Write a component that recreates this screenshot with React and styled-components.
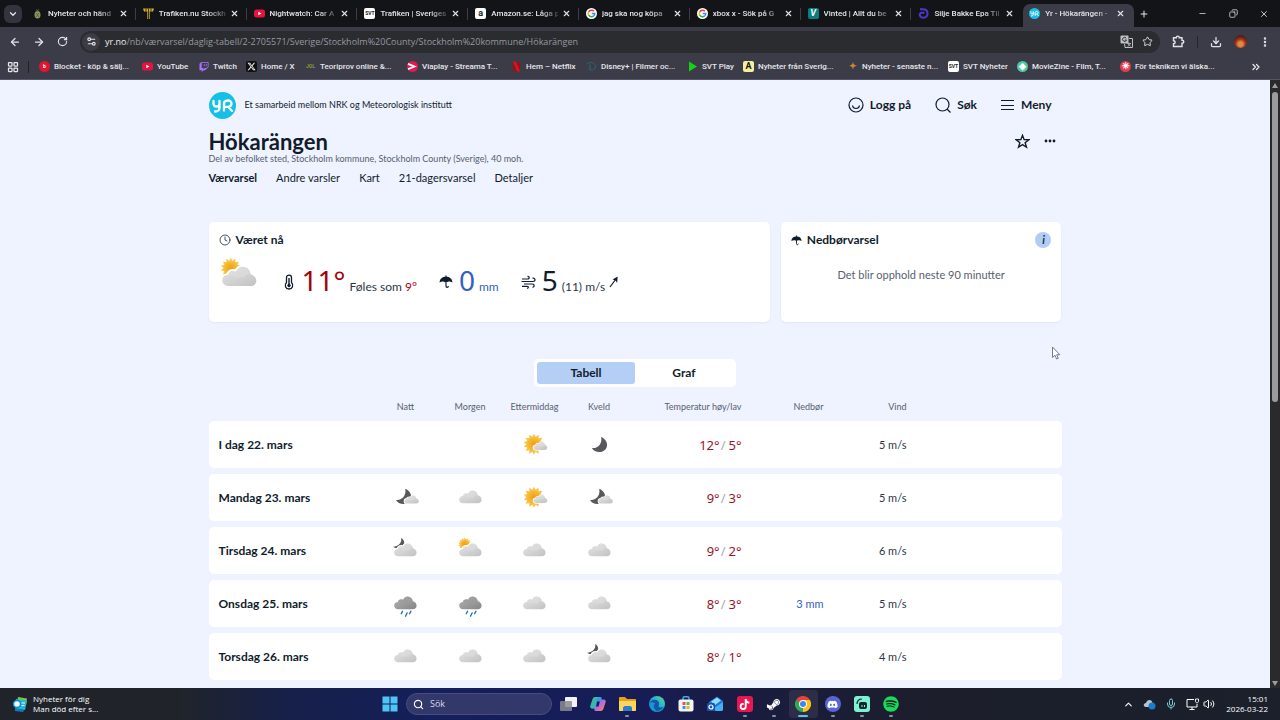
import React, { useState } from "react";
import styled, { createGlobalStyle } from "styled-components";
import {
  FaDiscord,
  FaSteamSymbol,
  FaSpotify,
  FaTiktok,
  FaXTwitter,
  FaTwitch,
} from "react-icons/fa6";
import {
  ArrowLeft,
  ArrowRight,
  ChevronDown,
  ChevronUp,
  ChevronsRight,
  Clock,
  Copy,
  Download,
  EllipsisVertical,
  LayoutGrid,
  Mic,
  Minus,
  Plus,
  RotateCw,
  Search,
  Settings2,
  Star,
  Volume2,
  X,
} from "lucide-react";

const GlobalStyle = createGlobalStyle`
  * {
    box-sizing: border-box;
  }

  body {
    margin: 0;
    font-family: "Lato", "Noto Sans", sans-serif;
    color: #101c2c;
    background: #eff2ff;
  }

  button {
    border: none;
    padding: 0;
    background: none;
    color: inherit;
    font: inherit;
    cursor: pointer;
  }

  a {
    color: inherit;
    text-decoration: none;
  }

  h1, h2, p {
    margin: 0;
  }

  svg {
    display: block;
    flex-shrink: 0;
  }
`;

const Screen = styled.div`
  display: flex;
  flex-direction: column;
  height: 100vh;
  overflow: hidden;
`;

/* browser */

const TabStrip = styled.div`
  display: flex;
  align-items: stretch;
  height: 27px;
  background: #121418;
  color: #e4e5ea;
  font-family: "Roboto", sans-serif;
  font-size: 8px;
  font-weight: 500;
`;

const TabSearch = styled.button`
  display: flex;
  align-items: center;
  justify-content: center;
  width: 18px;
  height: 18px;
  margin: 5px 4px;
  border-radius: 6px;
  background: #34343f;
`;

const Tabs = styled.div`
  flex: 1;
  display: flex;
  min-width: 0;
`;

const Tab = styled.div`
  flex: 1;
  display: flex;
  align-items: center;
  gap: 4px;
  min-width: 0;
  margin-top: ${(props) => (props.$active ? "4px" : "0")};
  height: ${(props) => (props.$active ? "23px" : "27px")};
  padding-bottom: ${(props) => (props.$active ? "4px" : "0")};
  padding-left: 6px;
  padding-right: 1px;
  border-radius: 7px 7px 0 0;
  background: ${(props) => (props.$active ? "#3c3c49" : "transparent")};

  > button:first-child {
    flex: 1;
    display: flex;
    align-items: center;
    gap: 5px;
    min-width: 0;
  }
`;

const TabTitle = styled.span`
  flex: 1;
  min-width: 0;
  text-align: left;
  white-space: nowrap;
  line-height: 12px;
  mask-image: linear-gradient(90deg, #000 74%, rgba(0, 0, 0, 0.2));
`;

const TabDivider = styled.span`
  width: 1px;
  height: 12px;
  margin-left: 3px;
  background: ${(props) => (props.$hidden ? "transparent" : "#3c3d46")};
`;

const WindowControls = styled.div`
  display: flex;
  align-items: center;
  justify-content: space-between;
  width: 146px;
  padding: 0 11px 0 5px;

  button:first-child {
    margin-right: 28px;
  }
`;

const Toolbar = styled.div`
  display: flex;
  align-items: center;
  gap: 12px;
  height: 29px;
  padding: 0 9px;
  background: #3c3c49;
  color: #e2e3ea;
`;

const AddressBar = styled.div`
  flex: 1;
  display: flex;
  align-items: center;
  gap: 9px;
  height: 22px;
  padding: 0 7px 0 2px;
  border-radius: 11px;
  background: #2b2c30;
`;

const SiteInfo = styled.span`
  display: flex;
  align-items: center;
  justify-content: center;
  width: 18px;
  height: 18px;
  margin-right: -4px;
  border-radius: 50%;
  background: #3c3c45;
`;

const Address = styled.div`
  flex: 1;
  color: #9698a0;
  font-family: "Open Sans", sans-serif;
  font-size: 9px;
  line-height: 14px;

  b {
    color: #f0f0f4;
    font-weight: 400;
  }
`;

const ToolDivider = styled.span`
  width: 1px;
  height: 12px;
  background: #23243a;
`;

const Avatar = styled.span`
  width: 13px;
  height: 13px;
  border-radius: 50%;
  background: radial-gradient(circle at 50% 70%, #e08a3c 0 20%, #a3301c 45%, #40201a 75%);
`;

const BookmarkBar = styled.nav`
  display: flex;
  align-items: center;
  height: 24px;
  padding: 0 18px 2px 7px;
  background: #3c3c49;
  color: #e6e6ec;
  font-family: "Roboto", sans-serif;
  font-size: 8px;
  font-weight: 500;
  border-bottom: 1px solid #55566a;
`;

const BookmarkDivider = styled.span`
  width: 1px;
  height: 12px;
  margin: 0 10px 0 9px;
  background: #1f2030;
`;

const Bookmark = styled.a`
  display: flex;
  align-items: center;
  gap: 4px;
  width: ${(props) => props.$width}px;
  white-space: nowrap;
  line-height: 12px;
`;

const Favicon = styled.span`
  display: flex;
  align-items: center;
  justify-content: center;
  flex-shrink: 0;
  width: 11px;
  height: 11px;
  border-radius: ${(props) => (props.$round ? "50%" : "2px")};
  background: ${(props) => props.$bg || "transparent"};
  color: ${(props) => props.$color || "#fff"};
  font-size: ${(props) => (props.$tiny ? "5px" : "9px")};
  font-weight: 700;
  line-height: 11px;
`;

const More = styled.button`
  margin-left: auto;
`;

/* page */

const Viewport = styled.div`
  flex: 1;
  display: flex;
  min-height: 0;
  position: relative;
  background: #eff2ff;
`;

const Page = styled.div`
  flex: 1;
  min-width: 0;
  overflow: hidden;
`;

const Container = styled.div`
  max-width: 853px;
  margin: 0 auto;
`;

const Scrollbar = styled.div`
  display: flex;
  flex-direction: column;
  align-items: center;
  width: 10px;
  padding: 3px 0 2px;
  background: #2a2a2d;
`;

const Track = styled.div`
  flex: 1;
  width: 6px;
  margin: 4px 0;
`;

const Thumb = styled.div`
  height: 53%;
  border-radius: 3px;
  background: #9c9c9e;
`;

const Header = styled.header`
  display: flex;
  align-items: center;
  height: 50px;
`;

const Tagline = styled.p`
  margin-left: 9px;
  font-size: 9px;
  line-height: 14px;
`;

const HeaderActions = styled.div`
  display: flex;
  gap: 24px;
  margin-left: auto;
  padding-right: 10px;
  font-size: 12px;
  font-weight: 700;

  button {
    display: flex;
    align-items: center;
    gap: 6px;
    line-height: 16px;
  }
`;

const TitleRow = styled.div`
  display: flex;
  align-items: flex-start;
  justify-content: space-between;

  h1 {
    font-size: 22px;
    font-weight: 700;
    line-height: 24px;
  }
`;

const TitleActions = styled.div`
  display: flex;
  align-items: center;
  gap: 14px;
  height: 22px;
  padding-right: 6px;
`;

const Place = styled.p`
  color: #56616f;
  font-size: 9px;
  line-height: 10px;
`;

const PageNav = styled.nav`
  display: flex;
  gap: 19px;
  margin-top: 6px;
  font-size: 11px;
  line-height: 16px;
`;

const PageLink = styled.a`
  font-weight: ${(props) => (props.$active ? 700 : 400)};
`;

const Cards = styled.div`
  display: grid;
  grid-template-columns: 2fr 1fr;
  gap: 11px;
  margin-top: 36px;
`;

const Card = styled.section`
  height: 100px;
  padding: 9px 10px;
  border-radius: 5px;
  background: #fff;
  box-shadow: 0 1px 2px rgba(60, 80, 150, 0.08);
`;

const CardHeader = styled.div`
  display: flex;
  align-items: center;
  gap: 5px;
  height: 18px;

  h2 {
    font-size: 12px;
    font-weight: 700;
    line-height: 16px;
  }
`;

const InfoButton = styled.button`
  width: 16px;
  height: 16px;
  margin-left: auto;
  border-radius: 50%;
  background: #b4cbf3;
  color: #102a5c;
  font-size: 11px;
  font-style: italic;
  font-weight: 700;
  line-height: 16px;
`;

const NowRow = styled.div`
  display: flex;
  align-items: flex-start;
  gap: 22px;
  margin-top: 8px;
`;

const Reading = styled.div`
  display: flex;
  align-items: baseline;
  gap: 4px;
  font-size: 12px;
  line-height: 46px;
  color: #2c3744;

  > svg {
    align-self: center;
    margin-bottom: 4px;
  }
`;

const Big = styled.span`
  margin-left: 2px;
  color: ${(props) => props.$color};
  font-family: "Noto Sans", sans-serif;
  font-size: 28px;
`;

const Colored = styled.span`
  color: ${(props) => props.$color};
`;

const DryText = styled.p`
  margin-top: 18px;
  color: #56616f;
  font-size: 11px;
  line-height: 16px;
  text-align: center;
`;

const Toggle = styled.div`
  display: flex;
  width: 202px;
  margin: 37px auto 0;
  padding: 3px;
  border-radius: 5px;
  background: #fff;
`;

const ToggleButton = styled.button`
  flex: 1;
  height: 22px;
  border-radius: 3px;
  background: ${(props) => (props.$active ? "#b4cff5" : "transparent")};
  font-size: 12px;
  font-weight: 700;
  line-height: 20px;
`;

const Forecast = styled.table`
  width: 100%;
  margin-top: 6px;
  border-collapse: separate;
  border-spacing: 0 6px;
  table-layout: fixed;
  font-size: 12px;

  th,
  td {
    padding: 0;
  }

  thead th {
    height: 16px;
    color: #56616f;
    font-size: 9px;
    font-weight: 400;
    line-height: 16px;
    white-space: nowrap;
  }

  tbody th,
  tbody td {
    height: 47px;
    background: #fff;
  }

  tbody th {
    padding-left: 10px;
    border-radius: 5px 0 0 5px;
    font-weight: 700;
    text-align: left;
  }

  tbody td:last-child {
    border-radius: 0 5px 5px 0;
  }

  td > svg {
    margin: 0 auto;
  }
`;

const Col = styled.col`
  width: ${(props) => props.$width}px;
`;

const NumberHead = styled.th`
  && {
    text-align: right;
  }
`;

const NumberCell = styled.td`
  color: ${(props) => props.$color || "#2c3744"};
  font-family: ${(props) => (props.$large ? '"Noto Sans", sans-serif' : "inherit")};
  font-size: ${(props) => (props.$large ? "13px" : "11px")};
  text-align: right;
  white-space: nowrap;
`;

const Slash = styled.span`
  margin: 0 3px 0 1px;
  color: #a7adb5;
`;

const Cursor = styled.svg`
  position: absolute;
  left: 1051px;
  top: 266px;
`;

/* taskbar */

const Taskbar = styled.footer`
  display: grid;
  grid-template-columns: 1fr auto 1fr;
  align-items: center;
  height: 32px;
  padding: 0 12px;
  background: linear-gradient(90deg, #20242a 0 14%, #172048 22%, #141f5c 34%, #171c55 50%, #1a1c40 58%, #1c1e2c 72%, #1b202b);
  color: #fff;
  font-family: "Open Sans", sans-serif;
  font-size: 8px;
  line-height: 10px;
`;

const News = styled.button`
  display: flex;
  align-items: center;
  gap: 4px;
  text-align: left;

  span {
    display: block;
  }
`;

const Dock = styled.div`
  display: flex;
  align-items: center;
  padding-left: 4px;
`;

const StartButton = styled.button`
  display: flex;
  justify-content: center;
  width: 24px;
  margin-right: 4px;
`;

const TaskSearch = styled.label`
  display: flex;
  align-items: center;
  gap: 6px;
  width: 146px;
  height: 22px;
  margin-right: 2px;
  padding: 0 6px;
  border: 1px solid #4a4d7c;
  border-radius: 11px;
  background: #32386a;

  input {
    width: 100%;
    min-width: 0;
    padding: 0;
    border: none;
    outline: none;
    background: none;
    color: #d8daea;
    font: inherit;
    font-size: 9px;
  }

  input::placeholder {
    color: #d8daea;
  }
`;

const Apps = styled.div`
  display: grid;
  grid-template-columns: repeat(12, 1fr);
  width: 352px;
`;

const AppButton = styled.button`
  display: flex;
  flex-direction: column;
  align-items: center;
  gap: 3px;
  height: 28px;
  padding-top: 6px;
  border-radius: 4px;
  background: ${(props) => (props.$active ? "rgba(255, 255, 255, 0.08)" : "none")};

  &::after {
    content: "";
    width: ${(props) => (props.$active ? "10px" : "4px")};
    height: 2px;
    border-radius: 1px;
    background: ${(props) =>
      props.$active ? "#5cc3ee" : props.$running ? "#8d90a5" : "transparent"};
  }
`;

const AppTile = styled.span`
  display: flex;
  align-items: center;
  justify-content: center;
  width: 16px;
  height: 16px;
  border-radius: ${(props) => (props.$round ? "50%" : "3px")};
  background: ${(props) => props.$bg};
  color: ${(props) => props.$color || "#fff"};
`;

const Tray = styled.div`
  display: flex;
  align-items: center;
  justify-content: flex-end;
  gap: 9px;

  time {
    margin-left: 2px;
    text-align: right;
  }

  time span {
    display: block;
  }
`;

const TrayGroup = styled.div`
  display: flex;
  align-items: center;
  gap: 4px;
`;

/* weather drawings */

const cloudPath =
  "M24 71 C14 71 8 65 8 57 C8 49 14 44 22 44 C23 38 28 34 35 34 C37 34 39 35 41 36 C45 28 51 24 58 24 C69 24 76 32 77 42 C85 44 91 50 91 58 C91 66 85 71 77 71 Z";

const star = (cx, cy, outer, inner, spikes) => {
  const points = [];
  for (let i = 0; i < spikes * 2; i++) {
    const r = i % 2 ? inner : outer;
    const a = (Math.PI * i) / spikes;
    points.push(`${(cx + r * Math.sin(a)).toFixed(1)},${(cy - r * Math.cos(a)).toFixed(1)}`);
  }
  return points.join(" ");
};

const Cloud = ({ dark, transform, outline }) => (
  <g transform={transform}>
    {outline && <path d={cloudPath} fill="#fff" stroke="#fff" strokeWidth="9" />}
    <path d={cloudPath} fill={dark ? "url(#cloud-dark)" : "url(#cloud-light)"} />
    <path
      d="M41 36 C45 28 51 24 58 24 C69 24 76 32 77 42 C68 41 62 47 61 53 C56 48 48 48 44 53 C40 49 30 44 22 44 C23 38 28 34 35 34 C37 34 39 35 41 36 Z"
      fill={dark ? "#9b9b9b" : "#dedede"}
      opacity="0.6"
    />
  </g>
);

const Sun = ({ cx, cy, r }) => (
  <g>
    <polygon points={star(cx, cy, r, r * 0.72, 14)} fill="#f7c34a" />
    <circle cx={cx} cy={cy} r={r * 0.66} fill="url(#sun)" />
  </g>
);

const moonPath = "M56 22 C68 27 78 38 78 51 C78 67 66 78 50 78 C37 78 27 72 22 63 C44 66 61 47 56 22 Z";

const WeatherIcon = ({ type, size = 27 }) => (
  <svg width={size} height={size} viewBox="0 0 100 100" role="img" aria-label={type}>
    {type === "fair" && (
      <>
        <Sun cx={48} cy={49} r={39} />
        <Cloud outline transform="translate(41 26) scale(0.62)" />
      </>
    )}
    {type === "clear-night" && <path d={moonPath} fill="#56585c" />}
    {type === "fair-night" && (
      <>
        <path d={moonPath} fill="#56585c" transform="translate(-7 -4)" />
        <Cloud outline transform="translate(41 27) scale(0.64)" />
      </>
    )}
    {type === "partly" && (
      <>
        <Sun cx={29} cy={27} r={25} />
        <Cloud outline />
      </>
    )}
    {type === "partly-night" && (
      <>
        <path
          d="M34 4 C47 11 49 27 39 36 C30 44 15 43 4 36 C22 36 37 24 34 4 Z"
          fill="#56585c"
        />
        <Cloud outline />
      </>
    )}
    {type === "cloudy" && <Cloud />}
    {type === "rain" && (
      <>
        <Cloud dark />
        <path
          d="M39 79 L34 88 M56 85 L50 97 M70 79 L65 88"
          stroke="#1673b5"
          strokeWidth="5"
          strokeLinecap="round"
        />
      </>
    )}
  </svg>
);

const Gradients = () => (
  <svg width="0" height="0" style={{ position: "absolute" }} aria-hidden="true">
    <defs>
      <linearGradient id="cloud-light" x1="0" y1="0" x2="1" y2="1">
        <stop offset="0" stopColor="#e4e4e4" />
        <stop offset="1" stopColor="#c2c2c2" />
      </linearGradient>
      <linearGradient id="cloud-dark" x1="0" y1="0" x2="1" y2="1">
        <stop offset="0" stopColor="#b4b4b4" />
        <stop offset="1" stopColor="#858585" />
      </linearGradient>
      <radialGradient id="sun">
        <stop offset="0" stopColor="#ee9d1c" />
        <stop offset="1" stopColor="#f8bf33" />
      </radialGradient>
      <linearGradient id="edge" x1="0" y1="1" x2="1" y2="0">
        <stop offset="0" stopColor="#1565c0" />
        <stop offset="0.5" stopColor="#22a7e0" />
        <stop offset="1" stopColor="#5be08a" />
      </linearGradient>
      <linearGradient id="copilot" x1="0" y1="0" x2="1" y2="1">
        <stop offset="0.1" stopColor="#1d9bf0" />
        <stop offset="0.5" stopColor="#b769e0" />
        <stop offset="0.9" stopColor="#f8854a" />
      </linearGradient>
    </defs>
  </svg>
);

const Umbrella = ({ size }) => (
  <svg width={size} height={size} viewBox="0 0 24 24" fill="none">
    <path d="M12 1 V4" stroke="#101c2c" strokeWidth="2" />
    <path d="M1 13 C1 6 6 3 12 3 C18 3 23 6 23 13 C20 11 17 11 15 12 H9 C7 11 4 11 1 13 Z" fill="#101c2c" />
    <path d="M12 11 V19 C12 22 16 22 16 19" stroke="#101c2c" strokeWidth="2" />
  </svg>
);

const ThermometerMark = () => (
  <svg width="14" height="16" viewBox="0 0 14 16" fill="none" stroke="#101c2c">
    <path d="M4.5 8.5 V3.5 C4.5 0.3 9.5 0.3 9.5 3.5 V8.5 C12 11 10.5 15 7 15 C3.5 15 2 11 4.5 8.5 Z" strokeWidth="1.3" />
    <path d="M7 4 V11" strokeWidth="1.4" />
    <circle cx="7" cy="11.5" r="1.3" fill="#101c2c" />
  </svg>
);

const WindMark = () => (
  <svg width="15" height="14" viewBox="0 0 15 14" fill="none" stroke="#101c2c" strokeWidth="1.2">
    <path d="M1 4 H6.5 C9 4 8.5 1 6.5 1.5" />
    <path d="M0.5 6.5 H12 C15 6.5 14.5 2.5 11.5 3.2" />
    <path d="M3 9 H11 C14 9 13.5 12.5 11.5 12" />
    <path d="M1 11.3 H6 C8 11.3 7.5 13.6 6 13.2" />
  </svg>
);

const YrLogo = ({ size }) => (
  <svg width={size} height={size} viewBox="0 0 54 54" fill="none" aria-label="Yr">
    <circle cx="27" cy="27" r="27" fill="#15bfe6" />
    <g stroke="#fff" strokeWidth="4.6" strokeLinecap="round" strokeLinejoin="round">
      <path d="M9 18 V23 C9 31 21 31 21 23 V18 M21 23 V31 C21 37 17 39 12 39" />
      <path d="M30 37 V23 C30 16 45 14 45 23 C45 30 38 30 34 30 M39 30 L46 38" />
    </g>
  </svg>
);

const Smiley = () => (
  <svg width="16" height="16" viewBox="0 0 16 16" fill="none" stroke="#101c2c" strokeWidth="1.2">
    <circle cx="8" cy="8" r="7" />
    <path d="M4.5 8.5 C5 12.5 11 12.5 11.5 8.5" />
  </svg>
);

const MagnifyingGlass = () => (
  <svg width="16" height="16" viewBox="0 0 16 16" fill="none" stroke="#101c2c" strokeWidth="1.2">
    <circle cx="7.5" cy="7.5" r="6.5" />
    <path d="M12 12 L15.5 15.5" />
  </svg>
);

const MenuLines = () => (
  <svg width="14" height="16" viewBox="0 0 14 16" stroke="#101c2c" strokeWidth="1.2">
    <path d="M0 3.5 H13 M0 8.5 H13 M0 12.5 H13" />
  </svg>
);

const StarOutline = () => (
  <svg width="15" height="15" viewBox="0 0 24 24" fill="none" stroke="#101c2c" strokeWidth="2.2">
    <path d="M12 2 L14.6 9 L22.2 9.2 L16.2 13.9 L18.4 21.2 L12 17 L5.6 21.2 L7.8 13.9 L1.8 9.2 L9.4 9 Z" />
  </svg>
);

const Dots = () => (
  <svg width="12" height="4" viewBox="0 0 12 4" fill="#101c2c">
    <circle cx="2" cy="2" r="1.4" />
    <circle cx="6" cy="2" r="1.4" />
    <circle cx="10" cy="2" r="1.4" />
  </svg>
);

const WindArrow = () => (
  <svg width="10" height="12" viewBox="0 0 10 12">
    <path d="M1 11 L7 3" stroke="#101c2c" strokeWidth="1.2" />
    <path d="M8.6 0.5 L8.2 7 L6.6 4.6 L3.6 3.6 Z" fill="#101c2c" />
  </svg>
);

const PuzzlePiece = () => (
  <svg width="13" height="13" viewBox="0 0 13 13" fill="none" stroke="currentColor" strokeWidth="1.4">
    <path d="M1.5 2.8 H4.3 C4.3 0.6 7.3 0.6 7.3 2.8 H10 V5.3 C12.4 5.3 12.4 8.3 10 8.3 V11.5 H1.5 V8.7 C3.7 8.7 3.7 5.7 1.5 5.7 Z" />
  </svg>
);

const TranslateMark = () => (
  <svg width="13" height="13" viewBox="0 0 13 13" fill="none">
    <rect x="0.5" y="0.5" width="8" height="8" rx="1" fill="#bfc0c6" />
    <path d="M6.3 3.3 A2 2 0 1 0 6.5 5 H4.8" stroke="#2b2c30" />
    <path d="M9 3.5 H12.5 V12.5 H5 L4.5 9" stroke="#bfc0c6" />
    <path d="M7 8.5 H11 M9 7.5 V8.5 M10.3 8.5 C10 10 8.5 11 7.5 11.3 M8 9 L10.5 11.3" stroke="#bfc0c6" strokeWidth="0.8" />
  </svg>
);

const ScreenMark = () => (
  <svg width="13" height="12" viewBox="0 0 13 12" fill="none" stroke="#fff">
    <path d="M8 1.5 H1 V9 H11 V6" />
    <path d="M3.5 11.5 H8.5 M6 9 V11.5" />
    <path d="M9.5 1 V3 C9.5 5.5 12.5 5.5 12.5 3 V1 Z" strokeWidth="0.9" />
  </svg>
);

/* brand marks */

const GoogleG = () => (
  <svg width="11" height="11" viewBox="0 0 22 22">
    <circle cx="11" cy="11" r="11" fill="#fff" />
    <g fill="none" strokeWidth="3">
      <path d="M16 6.6 A6.5 6.5 0 0 0 5.4 7.7" stroke="#ea4335" />
      <path d="M5.4 7.7 A6.5 6.5 0 0 0 5.4 14.3" stroke="#fbbc05" />
      <path d="M5.4 14.3 A6.5 6.5 0 0 0 15.4 15.8" stroke="#34a853" />
      <path d="M15.4 15.8 A6.5 6.5 0 0 0 17.5 11 H11.5" stroke="#4285f4" />
    </g>
  </svg>
);

const YouTubeMark = () => (
  <svg width="11" height="9" viewBox="0 0 22 18">
    <rect y="1" width="22" height="16" rx="5" fill="#e8133c" />
    <path d="M8.5 5.5 V12.5 L15 9 Z" fill="#fff" />
  </svg>
);

const PineappleMark = () => (
  <svg width="11" height="11" viewBox="0 0 11 11">
    <ellipse cx="5.5" cy="6.8" rx="3" ry="3.8" fill="#8d9660" />
    <path d="M5.5 4 L3.5 1 L5.5 2 L7.5 1 Z" fill="#55653a" />
    <path d="M4 5 L7 9 M7 5 L4 9" stroke="#4c5233" strokeWidth="0.7" />
  </svg>
);

const SignpostMark = () => (
  <svg width="11" height="11" viewBox="0 0 11 11">
    <path d="M0 0.5 H11 L10 3.5 H1 Z" fill="#d8b32c" />
    <path d="M4.3 3 H6.7 V11 H4.3 Z" fill="#d8b32c" />
    <path d="M3 0.5 V3.5 M5.5 0.5 V11 M8 0.5 V3.5" stroke="#121418" strokeWidth="0.8" />
  </svg>
);

const RingMark = () => (
  <svg width="11" height="11" viewBox="0 0 11 11" fill="none" stroke="#4f37cc" strokeWidth="2">
    <path d="M2 1.2 H5 C11 1.2 11 9.8 5.5 9.8 C1.5 9.8 0.5 5.5 3.5 4.8 H6.5" />
  </svg>
);

const PlayMark = () => (
  <svg width="11" height="11" viewBox="0 0 11 11">
    <path d="M2 0.5 L10 5.5 L2 10.5 Z" fill="#12d412" />
  </svg>
);

const NetflixMark = () => (
  <svg width="11" height="11" viewBox="0 0 11 11">
    <path d="M2 0.5 H4.5 V10.5 H2 Z M6.5 0.5 H9 V10.5 H6.5 Z" fill="#a80a14" />
    <path d="M2 0.5 H4.5 L9 10.5 H6.5 Z" fill="#e01320" />
  </svg>
);

const DisneyMark = () => (
  <svg width="11" height="11" viewBox="0 0 11 11" fill="none" stroke="#2a6676">
    <path d="M1 3 C4 0 10 2 9.5 6 C9 9.5 4 10 2.5 7.5 M4 3.5 V8.5" />
  </svg>
);

const ViaplayMark = () => (
  <svg width="11" height="11" viewBox="0 0 11 11" fill="none">
    <circle cx="5.5" cy="5.5" r="5.5" fill="#e5174d" />
    <path d="M1 2.8 L7.5 5.5 L1 8.2" stroke="#fff" strokeWidth="1.8" />
  </svg>
);

const ChromeMark = () => (
  <svg width="16" height="16" viewBox="0 0 32 32">
    <path d="M16 16 L2.1 8 A16 16 0 0 1 29.9 8 Z" fill="#ea4335" />
    <path d="M16 16 L29.9 8 A16 16 0 0 1 16 32 Z" fill="#fbc116" />
    <path d="M16 16 L16 32 A16 16 0 0 1 2.1 8 Z" fill="#34a853" />
    <path d="M16 8 H29.9 L23 20 Z" fill="#fbc116" />
    <path d="M2.1 8 L9 20 L16 16 Z" fill="#34a853" />
    <circle cx="16" cy="16" r="8" fill="#fff" />
    <circle cx="16" cy="16" r="6" fill="#4285f4" />
  </svg>
);

const TaskViewMark = () => (
  <svg width="17" height="16" viewBox="0 0 17 16">
    <rect x="5" y="1" width="12" height="10" rx="1" fill="#f3f3f5" />
    <rect x="0" y="5" width="12" height="10" rx="1" fill="#8b8c90" opacity="0.85" />
  </svg>
);

const CopilotMark = () => (
  <svg width="16" height="16" viewBox="0 0 16 16">
    <path d="M5 1 H10.5 C11.5 1 12 2 11.5 3.5 L9 12.500 C8.600 14 7.800 12.500 6 12.500 H2 C0.500 12.500 0 11 0.500 9.500 L2.500 3.500 C3 2 3.700 1 5 1 Z" fill="#2aa5e8" />
    <path d="M5 1 H8 L5 12.500 H2 C0.500 12.500 0 11 0.500 9.500 L2.500 3.500 C3 2 3.700 1 5 1 Z" fill="#3fc28d" opacity="0.7" />
    <path d="M11 15 H5.500 C4.500 15 4 14 4.500 12.500 L7 3.500 C7.400 2 8.200 3.500 10 3.500 H14 C15.500 3.500 16 5 15.500 6.500 L13.500 12.500 C13 14 12.300 15 11 15 Z" fill="url(#copilot)" />
    <path d="M7.200 5.500 H9.800 L8.600 10.500 H6 Z" fill="#171c50" />
  </svg>
);

const FolderMark = () => (
  <svg width="17" height="16" viewBox="0 0 17 16">
    <path d="M0 2 C0 1.5 0.5 1 1 1 H6 L8 3 H16 C16.6 3 17 3.4 17 4 V14 H0 Z" fill="#e3a21a" />
    <path d="M0 5 H17 V14 C17 14.6 16.6 15 16 15 H1 C0.4 15 0 14.6 0 14 Z" fill="#fcd65b" />
    <path d="M4 15 V12 C4 11 5 10 6 10 H11 C12 10 13 11 13 12 V15 Z" fill="#2a7fcf" />
  </svg>
);

const EdgeMark = () => (
  <svg width="16" height="16" viewBox="0 0 32 32">
    <circle cx="16" cy="16" r="16" fill="url(#edge)" />
    <path d="M2 14 C5 6 18 5 20 14 C21 18 18 19 19 21 C21 24 27 23 30 21 C26 29 16 32 10 28 C5 24 7 17 12 15 C8 12 4 12 2 14 Z" fill="#125a9c" />
    <path d="M12 15 C8 18 9 27 17 31 C9 32 1 26 1 17 C3 13 8 12 12 15 Z" fill="#1a94dc" />
  </svg>
);

const StoreMark = () => (
  <svg width="16" height="16" viewBox="0 0 16 16">
    <path d="M5 4 V2 C5 1 6 0.8 6.5 0.8 H9.5 C10 0.8 11 1 11 2 V4" fill="none" stroke="#39b4e8" strokeWidth="1.4" />
    <rect x="0.5" y="3.5" width="15" height="12" rx="2" fill="#f4f4f4" />
    <rect x="4.5" y="6" width="3" height="3" fill="#dc5a4a" />
    <rect x="8.5" y="6" width="3" height="3" fill="#74a94c" />
    <rect x="4.5" y="10" width="3" height="3" fill="#3b97d8" />
    <rect x="8.5" y="10" width="3" height="3" fill="#e9b62f" />
  </svg>
);

const OutlookMark = () => (
  <svg width="17" height="16" viewBox="0 0 17 16">
    <path d="M2 6 L10 0.5 L16 5 V13 C16 14.5 15 15 14 15 H5 C3 15 2 14 2 12 Z" fill="#1d78d6" />
    <path d="M4 5.5 L10 1.5 L14 4.5 L8 9 Z" fill="#8fdcff" />
    <path d="M16 6 L6 13 C8 15 11 15 14 15 C15.5 15 16 14 16 13 Z" fill="#43b2f5" />
    <rect x="0" y="7" width="8" height="8" rx="1.5" fill="#1555b5" />
    <circle cx="4" cy="11" r="2" fill="none" stroke="#fff" strokeWidth="1.2" />
  </svg>
);

const StreamlabsMark = () => (
  <svg width="12" height="12" viewBox="0 0 12 12" fill="none">
    <rect x="3" y="4" width="8" height="7" rx="2" fill="#0c2a2c" />
    <path d="M1 6 C1 3 3 1 6 1" stroke="#0c2a2c" strokeWidth="1.2" />
    <path d="M6 7 V9 M8.5 7 V9" stroke="#7ef2d2" />
  </svg>
);

const WindowsMark = () => (
  <svg width="16" height="16" viewBox="0 0 16 16" fill="#4cc6f5">
    <path d="M0.5 0.5 H7.5 V7.5 H0.5 Z M8.5 0.5 H15.5 V7.5 H8.5 Z M0.5 8.5 H7.5 V15.5 H0.5 Z M8.5 8.5 H15.5 V15.5 H8.5 Z" />
  </svg>
);

const NewsMark = () => (
  <svg width="17" height="17" viewBox="0 0 17 17">
    <path d="M6 1 L15 2.5 L14 9 L5 6 Z" fill="#7ac44a" />
    <path d="M4 3 L15 5 L13 14 L3 13 Z" fill="#28b4dc" />
    <path d="M3 12 L12 14 L11 16 L3 15 Z" fill="#1479b8" />
    <path d="M9.5 7 H13 M9.5 9.5 H12.5" stroke="#d5f4ff" />
    <circle cx="5" cy="8" r="3.5" fill="#e8fbff" stroke="#1a86cb" strokeWidth="1.4" />
  </svg>
);

const tabs = [
  { title: "Nyheter och händ", icon: <PineappleMark /> },
  { title: "Trafiken.nu Stockh", icon: <SignpostMark /> },
  { title: "Nightwatch: Car A", icon: <YouTubeMark /> },
  { title: "Trafiken | Sveriges", icon: <Favicon $bg="#fff" $color="#222" $tiny>SVT</Favicon> },
  { title: "Amazon.se: Låga p", icon: <Favicon $bg="#fff" $color="#1a1a1a">a</Favicon> },
  { title: "jag ska nog köpa", icon: <GoogleG /> },
  { title: "xbox x - Sök på G", icon: <GoogleG /> },
  { title: "Vinted | Allt du be", icon: <Favicon $bg="#0b7f80"><i>V</i></Favicon> },
  { title: "Silje Bakke Epa Til", icon: <RingMark /> },
  { title: "Yr - Hökarängen -", icon: <YrLogo size={11} />, active: true },
];

const bookmarks = [
  { label: "Blocket - köp & sälj...", width: 103, icon: <Favicon $round $bg="#e3142e" $tiny>b</Favicon> },
  { label: "YouTube", width: 56, icon: <YouTubeMark /> },
  { label: "Twitch", width: 48, icon: <Favicon $color="#a970ff"><FaTwitch size={10} /></Favicon> },
  { label: "Home / X", width: 59, icon: <Favicon $bg="#101012"><FaXTwitter size={9} /></Favicon> },
  { label: "Teoriprov online &...", width: 102, icon: <Favicon $color="#8a9c2c" $tiny>JOL</Favicon> },
  { label: "Viaplay - Streama T...", width: 104, icon: <ViaplayMark /> },
  { label: "Hem – Netflix", width: 75, icon: <NetflixMark /> },
  { label: "Disney+ | Filmer oc...", width: 101, icon: <DisneyMark /> },
  { label: "SVT Play", width: 56, icon: <PlayMark /> },
  { label: "Nyheter från Sverig...", width: 104, icon: <Favicon $bg="#f4f0a0" $color="#151515">A</Favicon> },
  { label: "Nyheter - senaste n...", width: 101, icon: <Favicon $color="#c98a2b">✦</Favicon> },
  { label: "SVT Nyheter", width: 69, icon: <Favicon $bg="#fff" $color="#222" $tiny>SVT</Favicon> },
  { label: "MovieZine - Film, T...", width: 103, icon: <Favicon $round $bg="#4cc9a0">◆</Favicon> },
  { label: "För tekniken vi älska...", width: 92, icon: <Favicon $round $bg="#e23b4c">✳</Favicon> },
];

const days = [
  { day: "I dag 22. mars", icons: ["", "", "fair", "clear-night"], high: 12, low: 5, wind: "5 m/s" },
  { day: "Mandag 23. mars", icons: ["fair-night", "cloudy", "fair", "fair-night"], high: 9, low: 3, wind: "5 m/s" },
  { day: "Tirsdag 24. mars", icons: ["partly-night", "partly", "cloudy", "cloudy"], high: 9, low: 2, wind: "6 m/s" },
  { day: "Onsdag 25. mars", icons: ["rain", "rain", "cloudy", "cloudy"], high: 8, low: 3, rain: "3 mm", wind: "5 m/s" },
  { day: "Torsdag 26. mars", icons: ["cloudy", "cloudy", "cloudy", "partly-night"], high: 8, low: 1, wind: "4 m/s" },
];

const apps = [
  { name: "Aktivitetsvy", icon: <TaskViewMark /> },
  { name: "Copilot", icon: <CopilotMark /> },
  { name: "Utforskaren", icon: <FolderMark />, running: true },
  { name: "Edge", icon: <EdgeMark /> },
  { name: "Store", icon: <StoreMark /> },
  { name: "Outlook", icon: <OutlookMark /> },
  { name: "TikTok", icon: <AppTile $bg="#e8174f"><FaTiktok size={11} /></AppTile>, running: true },
  { name: "Steam", icon: <AppTile $bg="transparent"><FaSteamSymbol size={15} /></AppTile>, running: true },
  { name: "Chrome", icon: <ChromeMark />, active: true },
  { name: "Discord", icon: <AppTile $round $bg="#5865d8"><FaDiscord size={11} /></AppTile>, running: true },
  { name: "Streamlabs", icon: <AppTile $bg="#7ef2d2"><StreamlabsMark /></AppTile>, running: true },
  { name: "Spotify", icon: <AppTile $round $bg="#0b2414" $color="#1ed760"><FaSpotify size={16} /></AppTile>, running: true },
];

const Browser = () => (
  <>
    <TabStrip>
      <TabSearch aria-label="Sök bland flikar">
        <ChevronDown size={10} strokeWidth={3} />
      </TabSearch>
      <Tabs>
        {tabs.map((tab, i) => (
          <Tab key={tab.title} $active={tab.active}>
            <button>
              {tab.icon}
              <TabTitle>{tab.title}</TabTitle>
            </button>
            <button aria-label="Stäng flik">
              <X size={9} strokeWidth={3} />
            </button>
            <TabDivider $hidden={i >= tabs.length - 2} />
          </Tab>
        ))}
      </Tabs>
      <WindowControls>
        <button aria-label="Ny flik"><Plus size={10} strokeWidth={2.5} /></button>
        <button aria-label="Minimera"><Minus size={9} /></button>
        <button aria-label="Återställ"><Copy size={9} transform="scale(-1 1)" /></button>
        <button aria-label="Stäng"><X size={10} /></button>
      </WindowControls>
    </TabStrip>
    <Toolbar>
      <button aria-label="Tillbaka"><ArrowLeft size={12} strokeWidth={2.5} /></button>
      <button aria-label="Framåt"><ArrowRight size={12} strokeWidth={2.5} /></button>
      <button aria-label="Läs in igen"><RotateCw size={11} strokeWidth={2.5} /></button>
      <AddressBar>
        <SiteInfo><Settings2 size={11} strokeWidth={2.5} /></SiteInfo>
        <Address>
          <b>yr.no</b>/nb/værvarsel/daglig-tabell/2-2705571/Sverige/Stockholm%20County/Stockholm%20kommune/Hökarängen
        </Address>
        <button aria-label="Översätt"><TranslateMark /></button>
        <button aria-label="Bokmärk"><Star size={11} /></button>
      </AddressBar>
      <button aria-label="Tillägg"><PuzzlePiece /></button>
      <ToolDivider />
      <button aria-label="Nedladdningar"><Download size={12} strokeWidth={2.5} /></button>
      <Avatar />
      <button aria-label="Meny"><EllipsisVertical size={12} strokeWidth={3} /></button>
    </Toolbar>
    <BookmarkBar>
      <LayoutGrid size={12} strokeWidth={2.5} />
      <BookmarkDivider />
      {bookmarks.map((item) => (
        <Bookmark key={item.label} href="#" $width={item.width}>
          {item.icon}
          {item.label}
        </Bookmark>
      ))}
      <More aria-label="Fler bokmärken"><ChevronsRight size={12} strokeWidth={2.5} /></More>
    </BookmarkBar>
  </>
);

const Forecasts = () => (
  <Forecast>
    <colgroup>
      <Col $width={165} />
      <Col $width={64} />
      <Col $width={65} />
      <Col $width={64} />
      <Col $width={65} />
      <Col $width={110} />
      <Col $width={82} />
      <Col $width={83} />
      <col />
    </colgroup>
    <thead>
      <tr>
        <th />
        <th>Natt</th>
        <th>Morgen</th>
        <th>Ettermiddag</th>
        <th>Kveld</th>
        <NumberHead>Temperatur høy/lav</NumberHead>
        <NumberHead>Nedbør</NumberHead>
        <NumberHead>Vind</NumberHead>
        <th />
      </tr>
    </thead>
    <tbody>
      {days.map((row) => (
        <tr key={row.day}>
          <th scope="row">{row.day}</th>
          {row.icons.map((icon, i) => (
            <td key={i}>{icon && <WeatherIcon type={icon} />}</td>
          ))}
          <NumberCell $large $color="#9a1226">
            {row.high}°<Slash>/</Slash>{row.low}°
          </NumberCell>
          <NumberCell $color="#3461c1">{row.rain}</NumberCell>
          <NumberCell>{row.wind}</NumberCell>
          <td />
        </tr>
      ))}
    </tbody>
  </Forecast>
);

const App = () => {
  const [view, setView] = useState("Tabell");

  return (
    <Screen>
      <GlobalStyle />
      <Gradients />
      <Browser />
      <Viewport>
        <Page>
          <Container>
            <Header>
              <YrLogo size={27} />
              <Tagline>Et samarbeid mellom NRK og Meteorologisk institutt</Tagline>
              <HeaderActions>
                <button><Smiley />Logg på</button>
                <button><MagnifyingGlass />Søk</button>
                <button><MenuLines />Meny</button>
              </HeaderActions>
            </Header>
            <TitleRow>
              <h1>Hökarängen</h1>
              <TitleActions>
                <button aria-label="Favoritt"><StarOutline /></button>
                <button aria-label="Mer"><Dots /></button>
              </TitleActions>
            </TitleRow>
            <Place>Del av befolket sted, Stockholm kommune, Stockholm County (Sverige), 40 moh.</Place>
            <PageNav>
              <PageLink href="#" $active>Værvarsel</PageLink>
              <PageLink href="#">Andre varsler</PageLink>
              <PageLink href="#">Kart</PageLink>
              <PageLink href="#">21-dagersvarsel</PageLink>
              <PageLink href="#">Detaljer</PageLink>
            </PageNav>
            <Cards>
              <Card>
                <CardHeader>
                  <Clock size={12} strokeWidth={1.5} />
                  <h2>Været nå</h2>
                </CardHeader>
                <NowRow>
                  <WeatherIcon type="partly" size={41} />
                  <Reading>
                    <ThermometerMark />
                    <Big $color="#a30008">11°</Big>
                    <span>Føles som <Colored $color="#a30008">9°</Colored></span>
                  </Reading>
                  <Reading>
                    <Umbrella size={14} />
                    <Big $color="#3461c1">0</Big>
                    <Colored $color="#3461c1">mm</Colored>
                  </Reading>
                  <Reading>
                    <WindMark />
                    <Big $color="#101c2c">5</Big>
                    <span>(11) m/s</span>
                    <WindArrow />
                  </Reading>
                </NowRow>
              </Card>
              <Card>
                <CardHeader>
                  <Umbrella size={11} />
                  <h2>Nedbørvarsel</h2>
                  <InfoButton aria-label="Informasjon">i</InfoButton>
                </CardHeader>
                <DryText>Det blir opphold neste 90 minutter</DryText>
              </Card>
            </Cards>
            <Toggle>
              {["Tabell", "Graf"].map((name) => (
                <ToggleButton key={name} $active={view === name} onClick={() => setView(name)}>
                  {name}
                </ToggleButton>
              ))}
            </Toggle>
            <Forecasts />
          </Container>
        </Page>
        <Scrollbar>
          <svg width="6" height="5" viewBox="0 0 6 5"><path d="M3 0 L6 5 H0 Z" fill="#9c9c9e" /></svg>
          <Track><Thumb /></Track>
          <svg width="6" height="5" viewBox="0 0 6 5"><path d="M3 5 L6 0 H0 Z" fill="#9c9c9e" /></svg>
        </Scrollbar>
        <Cursor width="10" height="14" viewBox="0 0 10 14">
          <path d="M1.5 1 V11.5 L4 9.2 L5.6 13 L7.3 12.3 L5.7 8.7 H8.8 Z" fill="#fff" stroke="#555b70" strokeWidth="0.8" />
        </Cursor>
      </Viewport>
      <Taskbar>
        <News>
          <NewsMark />
          <div>
            <span>Nyheter för dig</span>
            <span>Man död efter s...</span>
          </div>
        </News>
        <Dock>
          <StartButton aria-label="Start"><WindowsMark /></StartButton>
          <TaskSearch>
            <Search size={11} strokeWidth={2.5} />
            <input type="text" placeholder="Sök" aria-label="Sök" />
          </TaskSearch>
          <Apps>
            {apps.map((app) => (
              <AppButton key={app.name} aria-label={app.name} $active={app.active} $running={app.running}>
                {app.icon}
              </AppButton>
            ))}
          </Apps>
        </Dock>
        <Tray>
          <ChevronUp size={11} strokeWidth={2.5} />
          <svg width="13" height="12" viewBox="0 0 13 12">
            <path d="M3 9 C0 9 0 5 3 5 C4 1 9 1 9.5 5 C12 5 12 9 10 9 Z" fill="#b9c4cf" />
            <circle cx="9" cy="8" r="3.5" fill="#1a7bd0" />
          </svg>
          <Mic size={12} color="#7ccbd6" />
          <TrayGroup>
            <ScreenMark />
            <Volume2 size={12} />
          </TrayGroup>
          <time>
            <span>15:01</span>
            <span>2026-03-22</span>
          </time>
        </Tray>
      </Taskbar>
    </Screen>
  );
};

export default App;
